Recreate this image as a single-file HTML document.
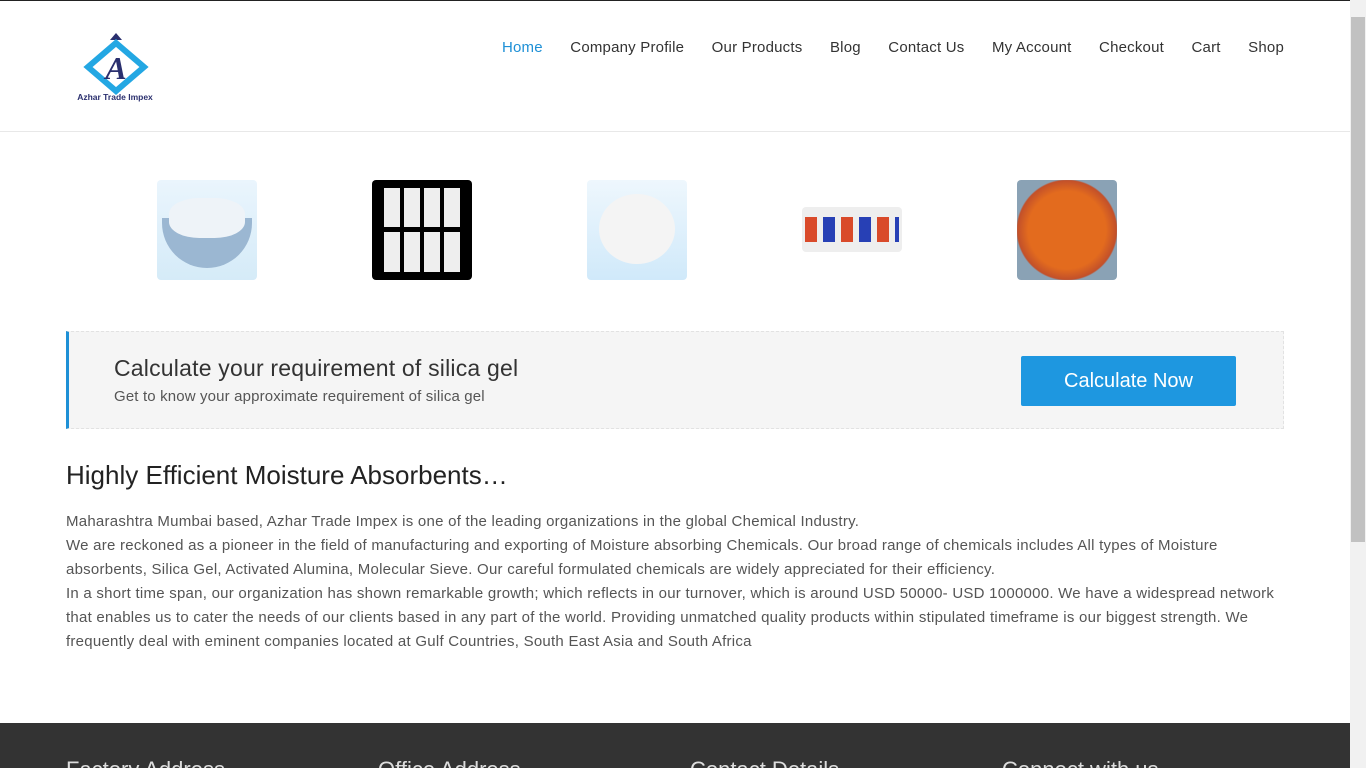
<!DOCTYPE html>
<html><head><meta charset="utf-8"><style>
*{margin:0;padding:0;box-sizing:border-box}
html,body{width:1366px;height:768px;overflow:hidden}
body{font-family:"Liberation Sans",sans-serif;background:#fff;position:relative}
.sb{position:absolute;right:0;top:0;width:16px;height:768px;background:#f1f1f1}
.sb i{position:absolute;left:1px;top:17px;width:14px;height:525px;background:#c1c1c1}
.page{position:absolute;left:0;top:0;width:1350px;height:768px;border-top:1px solid #222}
header{height:131px;border-bottom:1px solid #e8e8e8;position:relative}
nav{position:absolute;right:66px;top:38px;font-size:15px;color:#333;letter-spacing:0.2px;white-space:nowrap}
nav span{margin-left:27.5px}
nav .a{color:#1e90d6}
.prods{position:absolute;top:179px;left:0;width:100%}
.p{position:absolute;width:100px;height:100px;border-radius:4px}
.cta{position:absolute;left:66px;top:330px;width:1218px;height:98px;background:#f5f5f5;border:1px dashed #e2e2e2;border-left:3px solid #1e90d6}
.cta h3{position:absolute;left:45px;top:23px;font-weight:normal;font-size:23px;color:#333;letter-spacing:0.2px}
.cta p{position:absolute;left:45px;top:56px;font-size:15px;color:#555;letter-spacing:0.15px}
.btn{position:absolute;left:952px;top:24px;width:215px;height:50px;background:#1e97e0;color:#fff;font-size:20px;text-align:center;line-height:50px;border-radius:2px}
h1{position:absolute;left:66px;top:459px;font-weight:normal;font-size:26px;color:#222}
.txt{position:absolute;left:66px;top:509px;width:1222px;font-size:15px;line-height:24px;color:#555;letter-spacing:0.25px}
footer{position:absolute;left:0;top:722px;width:1350px;height:46px;background:#333;overflow:hidden}
footer span{position:absolute;top:34px;font-size:22px;color:#ddd}
</style></head><body>
<div class="page">
<header>
<svg style="position:absolute;left:74px;top:30px" width="84" height="72" viewBox="0 0 84 72">
<polygon points="42,2 48,9 36,9" fill="#2a2f6e"/>
<polygon points="42,12 70,36 42,60 14,36" fill="none" stroke="#23a7e3" stroke-width="6"/>
<text x="42" y="48" font-size="32" font-weight="bold" font-style="italic" fill="#2a2f6e" text-anchor="middle" font-family="Liberation Serif">A</text>
<text x="41" y="69" font-size="8.5" fill="#2a2f6e" text-anchor="middle" font-weight="bold">Azhar Trade Impex</text>
</svg>
<nav><span class="a">Home</span><span>Company Profile</span><span>Our Products</span><span>Blog</span><span>Contact Us</span><span>My Account</span><span>Checkout</span><span>Cart</span><span>Shop</span></nav>
</header>
<div class="prods">
<div class="p" style="left:157px;background:linear-gradient(#eaf5fd,#d5ebf8)"><div style="position:absolute;left:5px;top:38px;width:90px;height:50px;border-radius:0 0 45px 45px;background:#9bb7d2"></div><div style="position:absolute;left:12px;top:18px;width:76px;height:40px;border-radius:40%;background:#eef3f8"></div></div>
<div class="p" style="left:372px;background:#000"><div style="position:absolute;left:12px;top:8px;width:76px;height:84px;background:repeating-linear-gradient(90deg,#eee 0 16px,#000 16px 20px)"></div><div style="position:absolute;left:12px;top:47px;width:76px;height:5px;background:#000"></div></div>
<div class="p" style="left:587px;background:linear-gradient(#eef7fd,#d0e9fa)"><div style="position:absolute;left:12px;top:14px;width:76px;height:70px;border-radius:50%;background:#f4f4f4"></div></div>
<div class="p" style="left:802px;top:27px;height:45px;background:#eee"><div style="position:absolute;left:3px;top:10px;width:94px;height:25px;background:repeating-linear-gradient(90deg,#d94a2a 0 12px,#eee 12px 18px,#2740b5 18px 30px,#eee 30px 36px)"></div></div>
<div class="p" style="left:1017px;background:radial-gradient(#e36b1e 55%,#c2502a 70%,#8aa2b5 72%)"></div>
</div>
<div class="cta"><h3>Calculate your requirement of silica gel</h3><p>Get to know your approximate requirement of silica gel</p><div class="btn">Calculate Now</div></div>
<h1>Highly Efficient Moisture Absorbents…</h1>
<div class="txt">Maharashtra Mumbai based, Azhar Trade Impex is one of the leading organizations in the global Chemical Industry.<br>We are reckoned as a pioneer in the field of manufacturing and exporting of Moisture absorbing Chemicals. Our broad range of chemicals includes All types of Moisture absorbents, Silica Gel, Activated Alumina, Molecular Sieve. Our careful formulated chemicals are widely appreciated for their efficiency.<br>In a short time span, our organization has shown remarkable growth; which reflects in our turnover, which is around USD 50000- USD 1000000. We have a widespread network that enables us to cater the needs of our clients based in any part of the world. Providing unmatched quality products within stipulated timeframe is our biggest strength. We frequently deal with eminent companies located at Gulf Countries, South East Asia and South Africa</div>
<footer><span style="left:66px">Factory Address</span><span style="left:378px">Office Address</span><span style="left:690px">Contact Details</span><span style="left:1002px">Connect with us</span></footer>
</div>
<div class="sb"><i></i></div>
</body></html>
